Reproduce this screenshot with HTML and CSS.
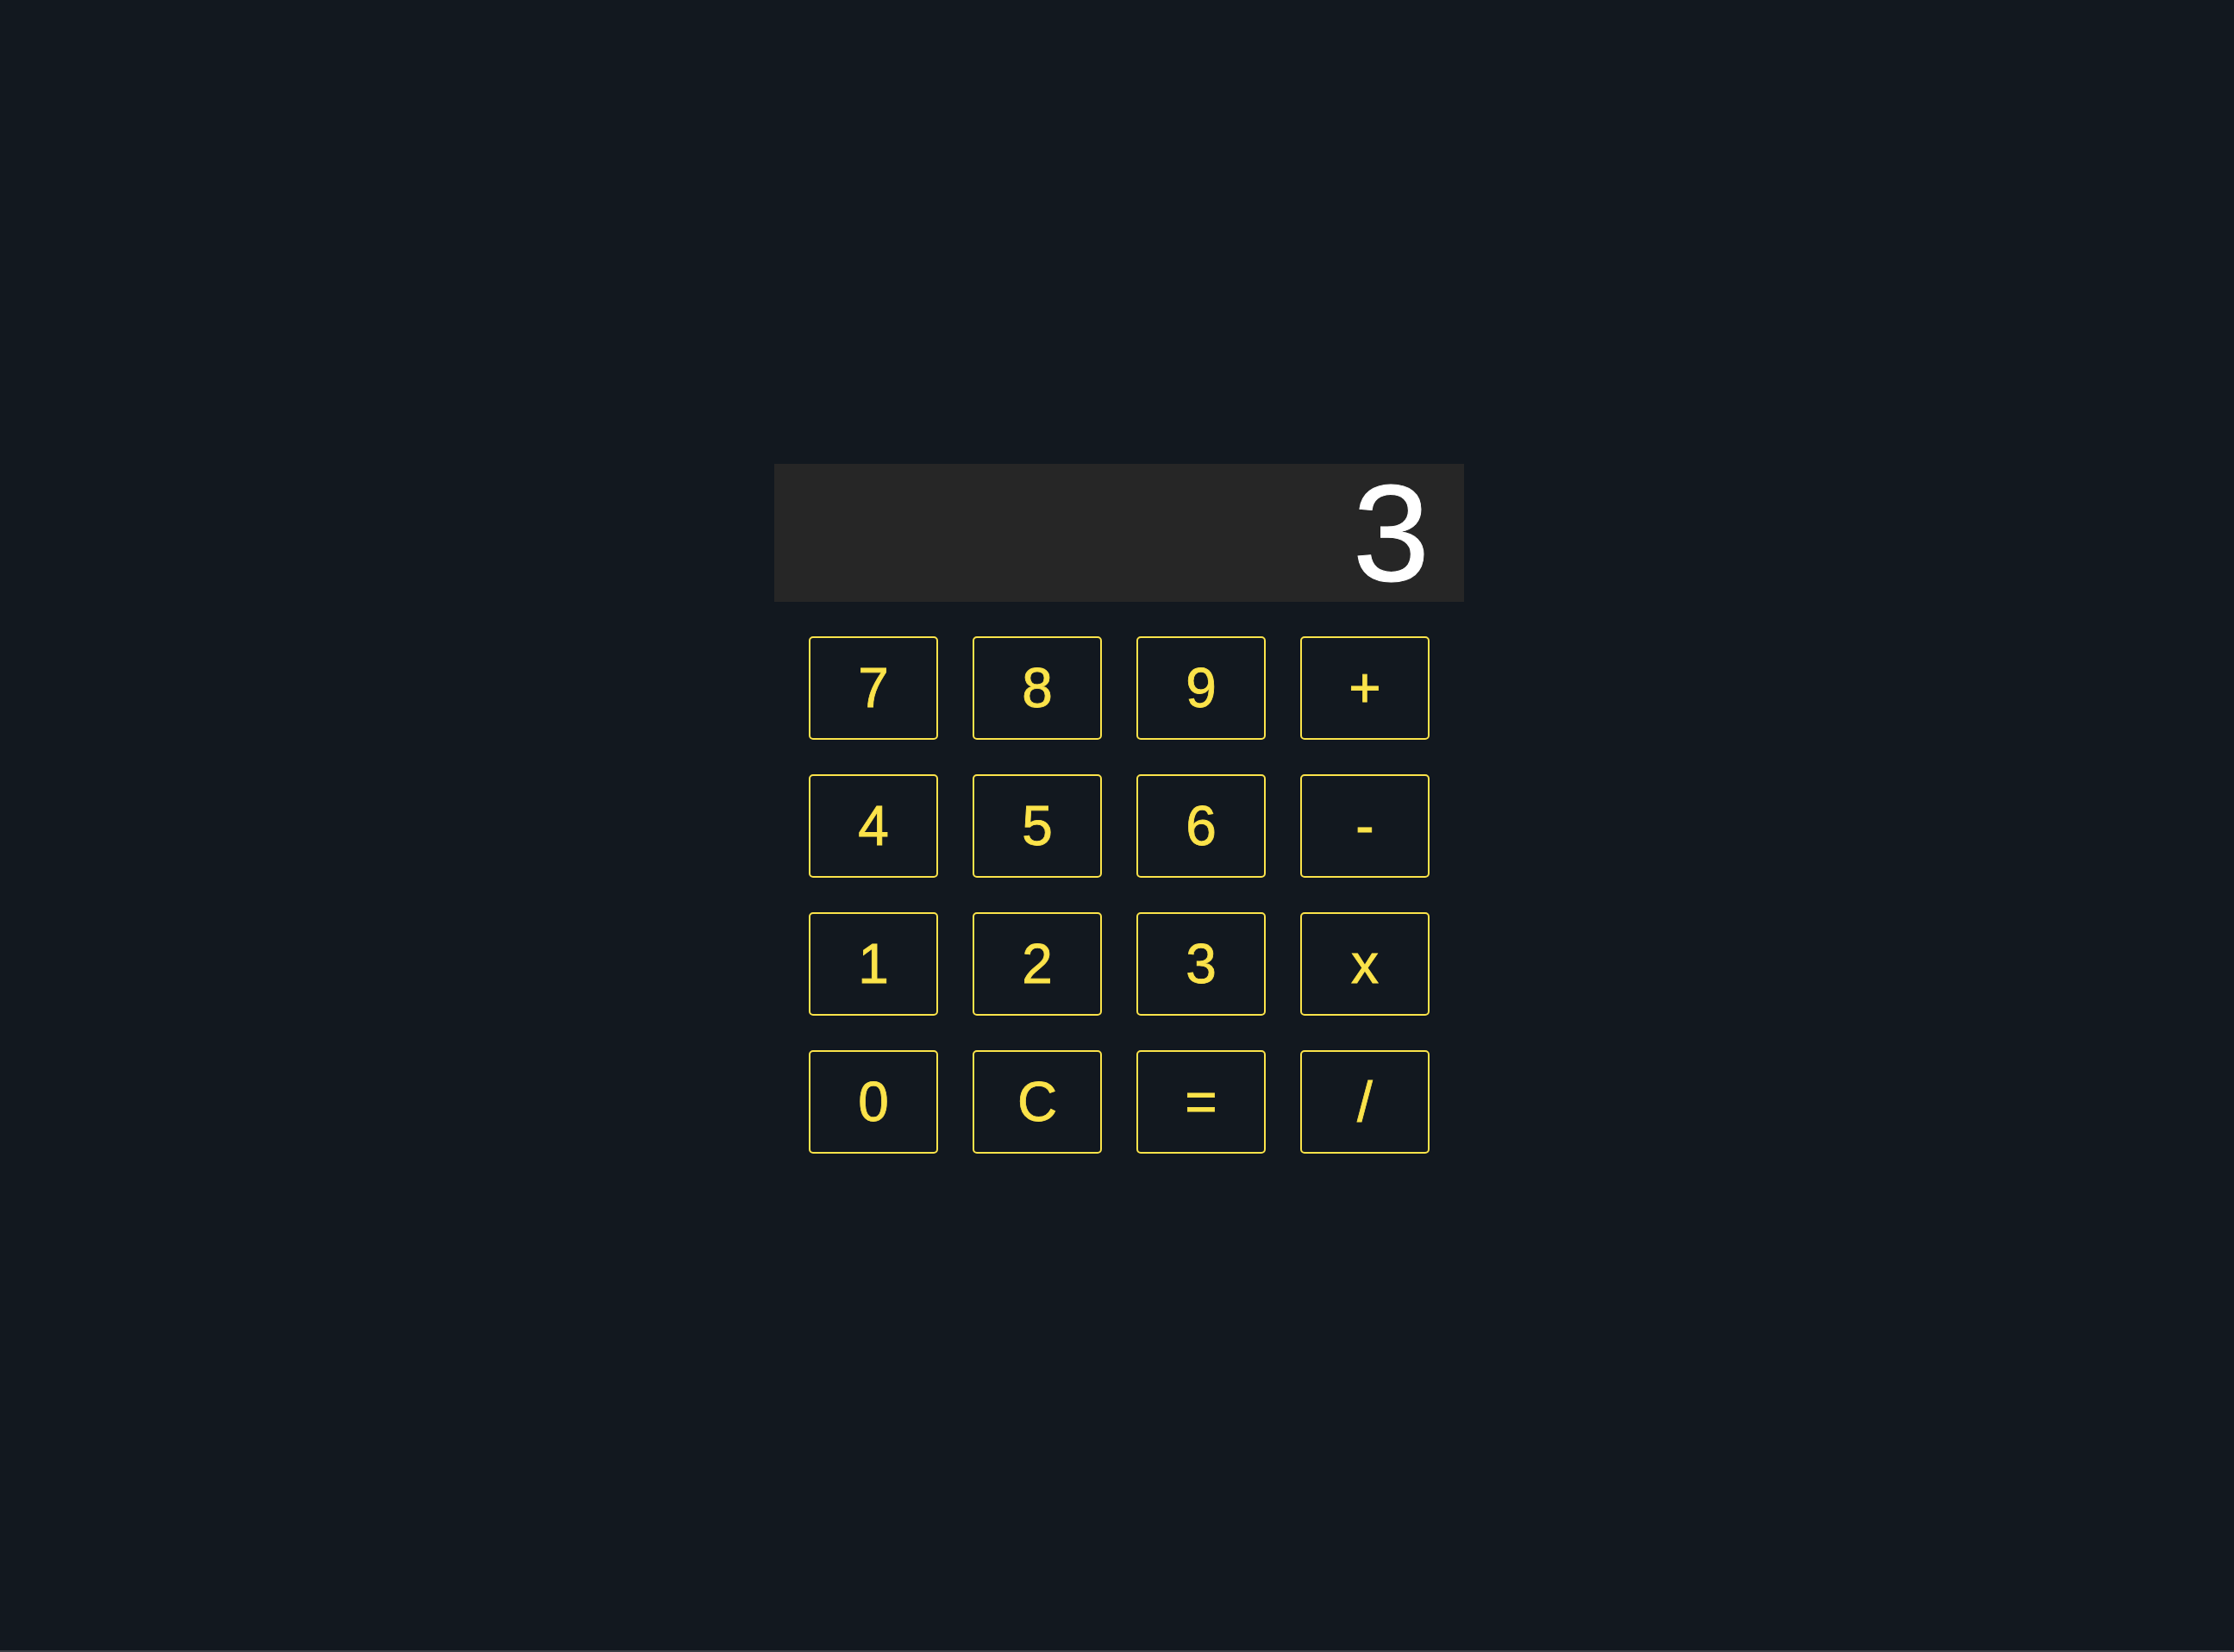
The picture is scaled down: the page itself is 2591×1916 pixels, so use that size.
FILE: index.html
```html
<!DOCTYPE html>
<html lang="en">
<head>
<meta charset="utf-8">
<title>Calculator</title>
<link rel="stylesheet" href="styles.css">
</head>
<body>
<div class="page">
  <div class="calculator">
    <div class="display">3</div>
    <div class="keypad">
      <button class="key">7</button>
      <button class="key">8</button>
      <button class="key">9</button>
      <button class="key">+</button>
      <button class="key">4</button>
      <button class="key">5</button>
      <button class="key">6</button>
      <button class="key">-</button>
      <button class="key">1</button>
      <button class="key">2</button>
      <button class="key">3</button>
      <button class="key">x</button>
      <button class="key">0</button>
      <button class="key">C</button>
      <button class="key">=</button>
      <button class="key">/</button>
    </div>
  </div>
</div>
</body>
</html>
```

FILE: styles.css
```css
html, body {
  margin: 0;
  padding: 0;
  background: #12181f;
  font-family: "Liberation Sans", Arial, sans-serif;
}

.page {
  box-sizing: border-box;
  min-height: 100vh;
  display: flex;
  justify-content: center;
  align-items: flex-start;
  padding: 538px 0 0 5px;
  border-bottom: 2px solid #3b3f46;
}

.calculator {
  width: 800px;
  display: flex;
  flex-direction: column;
  gap: 40px;
}

.display {
  background: #262626;
  color: #ffffff;
  font-size: 160px;
  line-height: 160px;
  height: 160px;
  text-align: right;
  padding: 0 40px;
  -webkit-text-stroke: 1px #ffffff;
}

.keypad {
  display: grid;
  grid-template-columns: repeat(4, 150px);
  grid-auto-rows: 120px;
  gap: 40px;
  padding: 0 40px;
}

.key {
  box-sizing: border-box;
  margin: 0;
  padding: 0;
  background: transparent;
  border: 2px solid #fbe34a;
  border-radius: 5px;
  color: #fbe34a;
  font-family: "Liberation Sans", Arial, sans-serif;
  font-size: 64px;
  line-height: normal;
  -webkit-text-stroke: 0.8px #fbe34a;
  cursor: pointer;
}
```
